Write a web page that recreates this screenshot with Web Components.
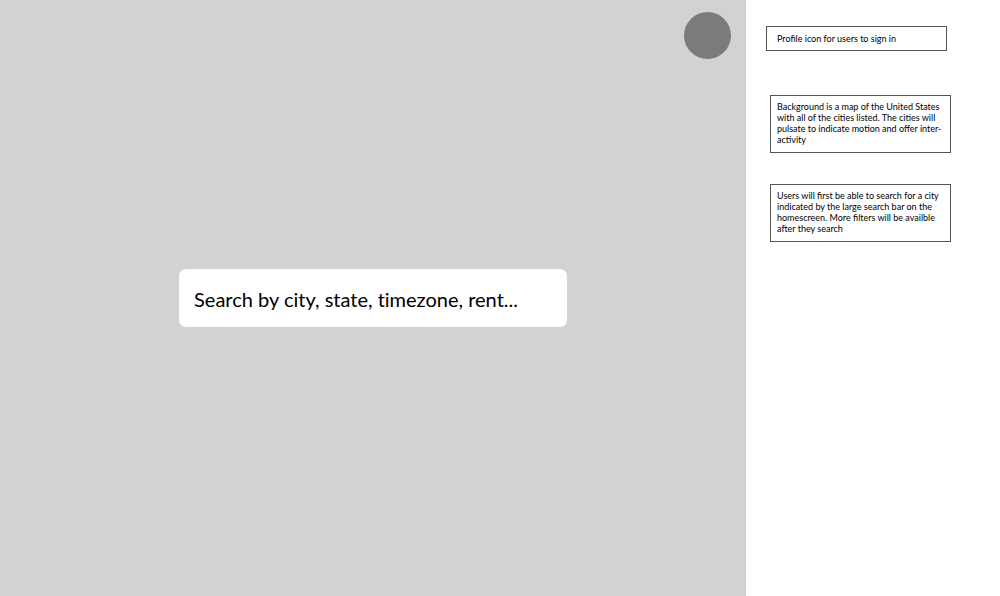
<!DOCTYPE html>
<html lang="en">
<head>
<meta charset="utf-8">
<meta name="viewport" content="width=device-width, initial-scale=1">
<title>City search wireframe</title>
<style>
  body { margin: 0; background: #fff; color: #000; font-family: Lato, "Noto Sans", sans-serif; }
</style>
</head>
<body>
<wire-frame>
  <home-screen>
    <profile-button slot="top"></profile-button>
    <city-search></city-search>
  </home-screen>
  <note-list slot="notes">
    <side-note class="label">Profile icon for users to sign in</side-note>
    <side-note>Background is a map of the United States<br>with all of the cities listed. The cities will<br>pulsate to indicate motion and offer inter-<br>activity</side-note>
    <side-note>Users will first be able to search for a city<br>indicated by the large search bar on the<br>homescreen. More filters will be availble<br>after they search</side-note>
  </note-list>
</wire-frame>
<script>
  const define = (name, html) => customElements.define(name, class extends HTMLElement {
    constructor() {
      super();
      this.attachShadow({ mode: "open" }).innerHTML = html;
    }
  });

  define("wire-frame", `
    <style>
      :host { display: grid; grid-template-columns: minmax(0, 1fr) 254px; min-height: 100vh; }
    </style>
    <slot></slot><slot name="notes"></slot>`);

  define("home-screen", `
    <style>
      :host { display: grid; grid-template-rows: 1fr auto 1fr; background: #d2d2d2; }
      header { display: flex; justify-content: flex-end; align-items: flex-start; padding: 12px 15px; }
      main { display: flex; justify-content: center; }
    </style>
    <header><slot name="top"></slot></header>
    <main><slot></slot></main>`);

  define("profile-button", `
    <style>
      :host { display: block; }
      button { display: block; width: 47px; height: 47px; padding: 0; border: 0; border-radius: 50%; background: #7b7b7b; cursor: pointer; }
    </style>
    <button type="button" aria-label="Sign in"></button>`);

  define("city-search", `
    <style>
      :host { display: block; width: 52%; }
      input { display: block; box-sizing: border-box; width: 100%; height: 58px; padding: 2px 15px 0; border: 0; border-radius: 7px; background: #fff; color: inherit; font: 20px/28px Lato, "Noto Sans", sans-serif; font-variant-ligatures: none; }
      input::placeholder { color: #000; opacity: 1; }
    </style>
    <input type="text" aria-label="Search" placeholder="Search by city, state, timezone, rent...">`);

  define("note-list", `
    <style>
      :host { display: flex; flex-direction: column; gap: 31px; padding: 26px 49px 26px 24px; }
      ::slotted(.label) { margin: 0 4px 13px -4px; --note-padding: 6px 10px; }
    </style>
    <slot></slot>`);

  define("side-note", `
    <style>
      :host { display: block; }
      p { margin: 0; padding: var(--note-padding, 5px 6px 7px); border: 1px solid #555; font-size: 9px; line-height: 11px; white-space: nowrap; }
    </style>
    <p><slot></slot></p>`);
</script>
</body>
</html>
